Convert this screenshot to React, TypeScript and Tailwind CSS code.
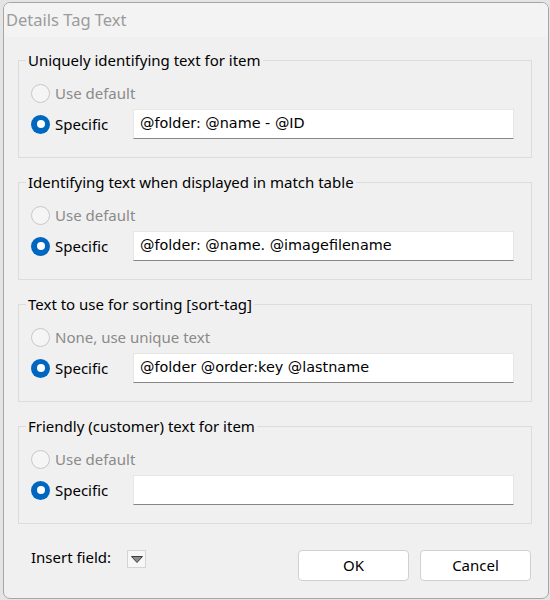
import React from 'react';

type Group = {
  legend: string;
  defaultLabel: string;
  value: string;
};

const groups: Group[] = [
  { legend: 'Uniquely identifying text for item', defaultLabel: 'Use default', value: '@folder: @name - @ID' },
  { legend: 'Identifying text when displayed in match table', defaultLabel: 'Use default', value: '@folder: @name. @imagefilename' },
  { legend: 'Text to use for sorting [sort-tag]', defaultLabel: 'None, use unique text', value: '@folder @order:key @lastname' },
  { legend: 'Friendly (customer) text for item', defaultLabel: 'Use default', value: '' },
];

const uiFont = "font-['Noto_Sans',sans-serif]";

// radio button, windows 11 look
const Radio = ({ checked }: { checked?: boolean }) =>
  checked ? (
    <span className="flex h-[19px] w-[19px] items-center justify-center rounded-full bg-[#0067c0]">
      <span className="h-[8px] w-[8px] rounded-full bg-white" />
    </span>
  ) : (
    <span className="h-[19px] w-[19px] rounded-full border border-[#c8c8c8] bg-[#f5f5f5]" />
  );

const TagGroup = ({ group }: { group: Group }) => (
  <div className="relative h-[98px] border border-[#dcdcdc] pl-[12px] pt-[17px]">
    {/* legend over the top border */}
    <span className="absolute left-[7px] top-[-11px] bg-[#f0f0f0] px-[2px] text-[15px] leading-[20px] text-black">
      {group.legend}
    </span>

    <div className="flex h-[31px] items-center">
      <Radio />
      <span className="ml-[5px] text-[15px] text-[#8a8a8a]">{group.defaultLabel}</span>
    </div>

    <div className="flex h-[30px] items-center">
      <Radio checked />
      <span className="ml-[5px] w-[78px] text-[15px] text-black">Specific</span>
      <div className="flex h-[30px] w-[381px] items-center border border-[#e6e6e6] border-b-[#868686] bg-white pl-[6px] font-['DejaVu_Sans',sans-serif] text-[14.4px] text-black">
        {group.value}
      </div>
    </div>
  </div>
);

export default function App() {
  return (
    <div className={`h-[600px] w-[550px] overflow-hidden bg-[#e4e4e4] ${uiFont}`}>
      <div className="ml-[3px] mt-[2px] flex h-[597px] w-[546px] flex-col overflow-hidden rounded-[7px] border border-[#a6a6a6] bg-[#f0f0f0]">
        {/* title bar */}
        <div className="flex h-[34px] items-center bg-[#f3f3f3] pl-[2px] text-[16.5px] text-[#9b9b9b]">
          Details Tag Text
        </div>

        <div className="flex flex-col gap-[24px] pl-[14px] pr-[16px] pt-[23px]">
          {groups.map((g) => (
            <TagGroup key={g.legend} group={g} />
          ))}
        </div>

        {/* footer */}
        <div className="flex items-start pl-[27px] pr-[17px] pt-[26px]">
          <div className="flex h-[18px] items-center">
            <span className="mt-[-3px] text-[15px] text-black">Insert field:</span>
            <button className="ml-[16px] flex h-[18px] w-[19px] items-center justify-center border border-[#d4d4d4] bg-[#f7f7f7]">
              <svg width="12" height="7" viewBox="0 0 12 7">
                <path d="M0.5 0.5 L11.5 0.5 L6 6.5 Z" fill="#8c8c8c" stroke="#3c3c3c" strokeWidth="1" />
              </svg>
            </button>
          </div>
          <div className="ml-auto flex gap-[11px]">
            <button className="h-[31px] w-[111px] rounded-[4px] border border-[#d0d0d0] bg-white text-[15px] text-black">
              OK
            </button>
            <button className="h-[31px] w-[111px] rounded-[4px] border border-[#d0d0d0] bg-white text-[15px] text-black">
              Cancel
            </button>
          </div>
        </div>
      </div>
    </div>
  );
}
